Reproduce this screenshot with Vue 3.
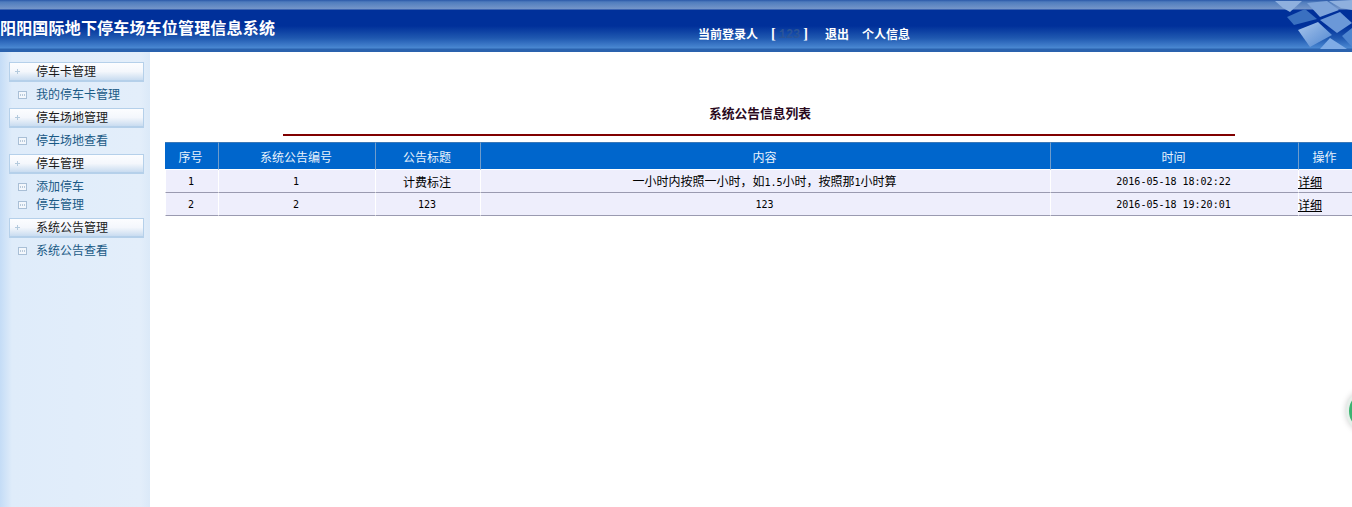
<script setup>
const menu = [
  { title: '停车卡管理', items: ['我的停车卡管理'] },
  { title: '停车场地管理', items: ['停车场地查看'] },
  { title: '停车管理', items: ['添加停车', '停车管理'] },
  { title: '系统公告管理', items: ['系统公告查看'] }
]
const columns = ['序号', '系统公告编号', '公告标题', '内容', '时间', '操作']
const rows = [
  { id: '1', no: '1', time: '2016-05-18 18:02:22' },
  { id: '2', no: '2', time: '2016-05-18 19:20:01' }
]
</script>

<template>
  <div class="page">
    <header class="top">
      <h1 class="brand">阳阳国际地下停车场车位管理信息系统</h1>
      <nav class="user">
        <span>当前登录人</span>
        <span class="bracket">[<em class="name">123</em>]</span>
        <a class="out">退出</a>
        <a class="info">个人信息</a>
      </nav>
      <svg class="keys" width="82" height="52" viewBox="0 0 82 52">
        <defs>
          <linearGradient id="fade" x1="0" y1="0" x2="1" y2="1">
            <stop offset="0" stop-color="#a9c6ec" />
            <stop offset="1" stop-color="#4f86d0" />
          </linearGradient>
        </defs>
        <polygon points="5,1 32,1 20,12 13,8" fill="#8fb0de" />
        <polygon points="37,3 57,1 69,10 50,17" fill="#7ea4da" />
        <polygon points="59,1 82,0 82,10 71,8" fill="#8fb0de" />
        <polygon points="17,17 35,9 47,19 24,25" fill="#3a70c0" />
        <polygon points="50,20 70,12 82,23 67,33" fill="#6b98d8" />
        <polygon points="28,30 48,22 62,35 40,47" fill="url(#fade)" />
        <polygon points="50,49 60,38 77,49" fill="#7facE6" />
        <polygon points="72,36 82,28 82,47" fill="#4f86d0" />
      </svg>
    </header>

    <div class="body">
      <aside class="side">
        <section v-for="group in menu" :key="group.title" class="group">
          <div class="head">
            <svg class="plus" width="7" height="7" viewBox="0 0 7 7">
              <path d="M3.5 1v5M1 3.5h5" stroke="#b4cadd" fill="none" />
            </svg>
            <span class="head-label">{{ group.title }}</span>
          </div>
          <ul class="list">
            <li v-for="item in group.items" :key="item" class="item">
              <svg class="doc" width="9" height="8" viewBox="0 0 9 8">
                <rect x="0.5" y="0.5" width="8" height="7" fill="#f3f7fc" stroke="#a9bfd6" />
                <path d="M2 4h1M4 4h1M6 4h1" stroke="#7f9cb8" fill="none" />
              </svg>
              <span class="label">{{ item }}</span>
            </li>
          </ul>
        </section>
      </aside>

      <main class="main">
        <div class="heading">
          <h2 class="title">系统公告信息列表</h2>
          <div class="rule"></div>
        </div>
        <table class="grid">
          <colgroup>
            <col class="c1" /><col class="c2" /><col class="c3" /><col class="c4" /><col class="c5" /><col class="c6" />
          </colgroup>
          <thead>
            <tr>
              <th v-for="c in columns" :key="c">{{ c }}</th>
            </tr>
          </thead>
          <tbody>
            <tr v-for="(r, i) in rows" :key="r.id">
              <td class="num">{{ r.id }}</td>
              <td class="num">{{ r.no }}</td>
              <td v-if="i === 0">计费标注</td>
              <td v-else class="num">123</td>
              <td v-if="i === 0">一小时内按照一小时，如<span class="num">1.5</span>小时，按照那<span class="num">1</span>小时算</td>
              <td v-else class="num">123</td>
              <td class="num">{{ r.time }}</td>
              <td class="act"><a>详细</a></td>
            </tr>
          </tbody>
        </table>
      </main>
    </div>
    <div class="float"></div>
  </div>
</template>

<style>
html, body { margin: 0; overflow: hidden; background: #fff; }
</style>

<style scoped>
.page {
  position: relative;
  width: 1352px;
  height: 507px;
  overflow: hidden;
  display: flex;
  flex-direction: column;
  font-family: "Noto Sans CJK SC", "Noto Sans", sans-serif;
  font-size: 12px;
  color: #000;
}
.top {
  position: relative;
  flex: 0 0 52px;
  height: 52px;
  box-sizing: border-box;
  display: flex;
  align-items: flex-start;
  background: linear-gradient(to bottom,
    #2a58a8 0, #4f7cbd 2px, #7596c9 9px, #00309a 10px, #00309a 26px, #1f58b0 38px, #4a88d2 48px, #2a62ae 49px, #2a62ae 52px);
}
.brand {
  margin: 0;
  width: 698px;
  flex: none;
  font-size: 16px;
  letter-spacing: 0.18px;
  line-height: 20px;
  padding-top: 17px;
  font-weight: 700;
  color: #fff;
  white-space: nowrap;
}
.user {
  display: flex;
  padding-top: 25px;
  line-height: 17px;
  font-weight: 700;
  color: #fff;
  white-space: nowrap;
}
.bracket { margin-left: 13px; font-family: "Liberation Serif", serif; font-size: 14px; }
.name {
  font-style: normal;
  font-family: "Liberation Mono", monospace;
  font-size: 12px;
  margin: 0 3px;
  color: #2a5498;
}
.out { margin-left: 17px; }
.info { margin-left: 13px; }
.keys { position: absolute; right: 0; top: 0; filter: blur(0.6px); }
.body { flex: 1; display: flex; min-height: 0; }
.side {
  width: 150px;
  flex: none;
  box-sizing: border-box;
  padding: 10px 6px 0 9px;
  background: linear-gradient(to right, #c4dcf6 0, #dfecfa 12px, #e3eefa 140px, #dbe9f8 150px);
}
.head {
  height: 20px;
  box-sizing: border-box;
  width: 135px;
  display: flex;
  align-items: center;
  border: 1px solid #b5d0ea;
  border-bottom-width: 2px;
  background: linear-gradient(to bottom, #fcfdff 0, #f4f7fc 50%, #c9dcf0 100%);
  color: #1a1a1a;
  line-height: 17px;
}
.head-label { position: relative; top: -1px; }
.plus { margin: 0 15px 0 4px; flex: none; }
.list { list-style: none; margin: 0; padding: 4px 0; }
.item {
  height: 18px;
  line-height: 18px;
  display: flex;
  align-items: center;
  color: #1a5a86;
}
.label { position: relative; top: -1px; }
.doc { margin: 0 9px 0 9px; flex: none; }
.main { flex: 1; min-width: 0; padding-left: 15px; }
.heading { margin: 0 117px 0 118px; padding-top: 51px; }
.title {
  margin: 0;
  padding-left: 2px;
  text-align: center;
  font-size: 12.75px;
  line-height: 20px;
  font-weight: 700;
  color: #2a0a1e;
}
.rule { height: 2px; margin-top: 11px; background: #800000; }
.grid {
  margin-top: 6px;
  width: 1187px;
  table-layout: fixed;
  border-collapse: separate;
  border-spacing: 0;
}
.c1 { width: 54px; } .c2 { width: 157px; } .c3 { width: 105px; }
.c4 { width: 570px; } .c5 { width: 248px; } .c6 { width: 53px; }
th {
  height: 28px;
  padding: 0 2px 0 0;
  box-sizing: border-box;
  background: #0066cc;
  border-right: 1px solid #6f9ccb;
  border-top: 1px solid #3a78b8;
  border-bottom: 1px solid #fff;
  color: #e8f2fc;
  font-weight: 400;
  line-height: 17px;
}
th:last-child { border-right: 0; }
td {
  height: 23px;
  padding: 0 2px 0 0;
  box-sizing: border-box;
  text-align: center;
  background: #eeeefc;
  border-right: 1px solid #fff;
  border-bottom: 1px solid #9a9ab0;
  line-height: 17px;
  white-space: nowrap;
}
td:first-child { border-left: 1px solid #fff; }
td:last-child { border-right: 0; }
.num { font-family: "DejaVu Sans Mono", monospace; font-size: 10px; }
.act { text-align: left; }
.act a { font-size: 12px; color: #000; text-decoration: underline; margin-left: -1px; }
.float {
  position: absolute;
  left: 1346px;
  top: 391px;
  width: 34px;
  height: 40px;
  border-radius: 50%;
  background: #3cb371;
  border: 3px solid #e6efea;
  box-sizing: border-box;
  box-shadow: 0 0 6px rgba(0, 0, 0, 0.2);
}
</style>
